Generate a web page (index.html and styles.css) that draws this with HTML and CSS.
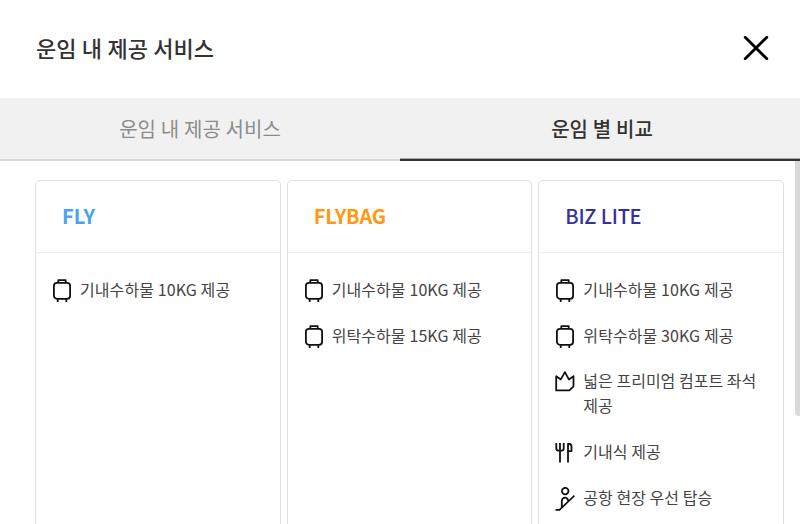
FILE: index.html
```html
<!DOCTYPE html>
<html lang="ko">
<head>
<meta charset="utf-8">
<title>운임 내 제공 서비스</title>
<link rel="stylesheet" href="styles.css">
</head>
<body>
<svg class="sprite" aria-hidden="true">
  <symbol id="bag" viewBox="0 0 20 24"><path d="M6.3 3.8V1.2h7.4v2.6"/><rect x="1.9" y="3.8" width="16.2" height="16" rx="3"/><path d="M5.7 20v3M14.3 20v3"/></symbol>
  <symbol id="crown" viewBox="0 0 20 24"><path d="M1.2 6.2v14.2h13.2l4.1-4V6.2l-4.6 3.2L9.9 2.1 5.8 9.4Z"/></symbol>
  <symbol id="meal" viewBox="0 0 20 24"><path d="M1.3 2v5.6q0 2 2 2h3.4q2 0 2-2V2M5 2v19.4M13 21.4V3h1.3q2.2 0 2.2 2.6v4.5H13"/></symbol>
  <symbol id="board" viewBox="0 0 20 24"><circle cx="10.2" cy="4.1" r="3.3"/><path d="M.5 22.8h4L19.5 8.6M6.8 20.3v-5.5q0-4.2 3.6-4.2 1.8 0 3.1 3.5"/></symbol>
</svg>
<div class="modal">
  <header class="header">
    <h1 class="title">운임 내 제공 서비스</h1>
    <svg class="close" viewBox="0 0 26 26"><path d="M2.2 2.2l21.6 21.6M23.8 2.2L2.2 23.8"/></svg>
  </header>
  <nav class="tabs">
    <div class="tab">운임 내 제공 서비스</div>
    <div class="tab active">운임 별 비교</div>
  </nav>
  <main class="content">
    <section class="card">
      <h2 class="name fly">FLY</h2>
      <ul class="list">
        <li class="baggage"><svg class="icon"><use href="#bag"/></svg><span>기내수하물 10KG 제공</span></li>
      </ul>
    </section>
    <section class="card">
      <h2 class="name flybag">FLYBAG</h2>
      <ul class="list">
        <li class="baggage"><svg class="icon"><use href="#bag"/></svg><span>기내수하물 10KG 제공</span></li>
        <li class="baggage"><svg class="icon"><use href="#bag"/></svg><span>위탁수하물 15KG 제공</span></li>
      </ul>
    </section>
    <section class="card">
      <h2 class="name biz">BIZ LITE</h2>
      <ul class="list">
        <li class="baggage"><svg class="icon"><use href="#bag"/></svg><span>기내수하물 10KG 제공</span></li>
        <li class="baggage"><svg class="icon"><use href="#bag"/></svg><span>위탁수하물 30KG 제공</span></li>
        <li><svg class="icon"><use href="#crown"/></svg><span>넓은 프리미엄 컴포트 좌석 제공</span></li>
        <li><svg class="icon"><use href="#meal"/></svg><span>기내식 제공</span></li>
        <li><svg class="icon"><use href="#board"/></svg><span>공항 현장 우선 탑승</span></li>
      </ul>
    </section>
    <div class="scrollbar"></div>
  </main>
</div>
</body>
</html>
```
FILE: styles.css
```css
* { box-sizing: border-box; }
body {
  margin: 0;
  overflow: hidden;
  background: #fff;
  color: #333;
  font-family: "Noto Sans CJK KR", sans-serif;
  word-spacing: -0.8px;
}
h1, h2, ul { margin: 0; padding: 0; }
.sprite { display: none; }
.modal {
  display: flex;
  flex-direction: column;
  height: 524px;
  overflow: hidden;
}
.header {
  display: flex;
  flex: none;
  align-items: center;
  justify-content: space-between;
  height: 98px;
  padding: 0 31px 2px 36px;
}
.title { margin-bottom: 2px; font-size: 22px; font-weight: 500; line-height: 32px; }
.close {
  width: 26px;
  height: 26px;
  fill: none;
  stroke: #000;
  stroke-width: 2.8;
  stroke-linecap: round;
}
.tabs {
  display: grid;
  flex: none;
  grid-template-columns: 1fr 1fr;
  height: 63px;
  background: #f1f1f1;
}
.tab {
  border-bottom: 2px solid #d8d8d8;
  color: #8c8c8c;
  font-size: 20px;
  line-height: 61px;
  text-align: center;
}
.tab.active {
  padding-left: 4px;
  border-bottom: 2px solid #333;
  box-shadow: inset 0 -1px #aaa;
  color: #333;
  font-weight: 500;
}
.content {
  position: relative;
  display: grid;
  flex: 1;
  grid-template-columns: repeat(3, 1fr);
  gap: 6px;
  min-height: 0;
  padding: 19px 16px 0 35px;
}
.card {
  height: 380px;
  border: 1px solid #e0e0e0;
  border-radius: 5px;
}
.name {
  height: 72px;
  padding-left: 26px;
  border-bottom: 1px solid #eee;
  font-size: 20px;
  font-weight: 500;
  line-height: 69px;
}
.fly { color: #4ba3ef; font-weight: 700; }
.flybag { color: #ff9912; font-weight: 700; letter-spacing: -0.2px; }
.biz { color: #34319b; letter-spacing: -0.25px; }
.list {
  display: grid;
  gap: 20.8px;
  padding: 24px 20px 0 16px;
  list-style: none;
}
.list li {
  display: flex;
  gap: 8px;
  color: #444;
  font-size: 16px;
  line-height: 24.9px;
  word-break: keep-all;
}
.list .baggage { letter-spacing: 0.08px; }
.icon {
  flex: none;
  width: 20px;
  height: 24px;
  margin-top: 2px;
  margin-bottom: -2px;
  fill: none;
  stroke: #111;
  stroke-width: 1.8;
  stroke-linejoin: round;
}
.scrollbar {
  position: absolute;
  top: 0;
  right: 0;
  width: 5px;
  height: 255px;
  border-radius: 0 0 0 4px;
  background: #d9d9d9;
}
```
